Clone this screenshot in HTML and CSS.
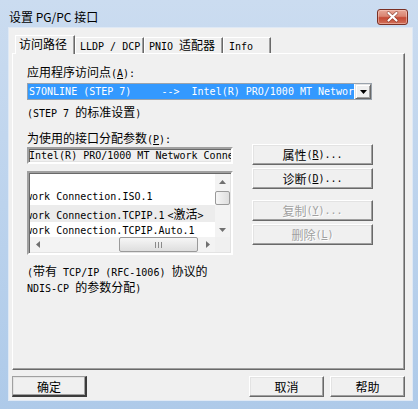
FILE: index.html
```html
<!DOCTYPE html>
<html lang="zh-CN">
<head>
  <meta charset="UTF-8" />
  <title>设置 PG/PC 接口</title>
  <link rel="stylesheet" href="styles.css">
</head>
<body>
  <div class="window">
    <div class="titlebar">
      <div class="title">设置 PG/PC 接口</div>
      <div class="close">
        <svg width="29" height="14" viewBox="0 0 29 14">
          <path d="M10.5 3 L18.5 10.5 M18.5 3 L10.5 10.5" stroke="#6a2218" stroke-width="3.6" stroke-linecap="round" opacity="0.55" />
          <path d="M10.5 3 L18.5 10.5 M18.5 3 L10.5 10.5" stroke="#fff" stroke-width="2.2" stroke-linecap="round" />
        </svg>
      </div>
    </div>

    <div class="client">
      <div class="tabs">
        <div class="tab active">访问路径</div>
        <div class="tab tab-lldp"><span class="m">LLDP / DCP</span></div>
        <div class="tab tab-pnio"><span class="m">PNIO </span>适配器</div>
        <div class="tab tab-info"><span class="m">Info</span></div>
      </div>

      <div class="panel">
        <div class="label">应用程序访问点<span class="m">(<u>A</u>):</span></div>
        <div class="combo">
          <div class="combo-value m">S7ONLINE (STEP 7)     -->  Intel(R) PRO/1000 MT Network Connection.TCPIP.1</div>
          <div class="combo-btn">
            <svg width="7" height="4" viewBox="0 0 7 4"><path d="M0 0 H7 L3.5 4 Z" fill="#000" /></svg>
          </div>
        </div>
        <div class="note"><span class="m">(STEP 7 </span>的标准设置<span class="m">)</span></div>

        <div class="label label-params">为使用的接口分配参数<span class="m">(<u>P</u>):</span></div>
        <div class="params">
          <div class="params-left">
            <div class="textfield m">Intel(R) PRO/1000 MT Network Connection.TCPIP.1</div>
            <div class="listbox">
              <div class="list-items m">
                <div class="list-row first"></div>
                <div class="list-row"><span class="cut">Network Connection.ISO.1</span></div>
                <div class="list-row selected"><span class="cut">Network Connection.TCPIP.1</span><span class="tag">&lt;<span class="zh">激活</span>&gt;</span></div>
                <div class="list-row"><span class="cut">Network Connection.TCPIP.Auto.1</span></div>
              </div>
              <div class="vsb">
                <div class="sb-btn">
                  <svg width="7" height="4" viewBox="0 0 7 4"><path d="M0 4 H7 L3.5 0 Z" fill="#707070" /></svg>
                </div>
                <div class="vsb-track"><div class="vsb-thumb"></div></div>
                <div class="sb-btn">
                  <svg width="7" height="4" viewBox="0 0 7 4"><path d="M0 0 H7 L3.5 4 Z" fill="#707070" /></svg>
                </div>
              </div>
              <div class="hsb">
                <div class="sb-btn">
                  <svg width="4" height="7" viewBox="0 0 4 7"><path d="M4 0 V7 L0 3.5 Z" fill="#707070" /></svg>
                </div>
                <div class="hsb-track"><div class="hsb-thumb"><span></span><span></span><span></span></div></div>
                <div class="sb-btn">
                  <svg width="4" height="7" viewBox="0 0 4 7"><path d="M0 0 V7 L4 3.5 Z" fill="#707070" /></svg>
                </div>
              </div>
              <div class="sb-corner"></div>
            </div>
          </div>

          <div class="params-right">
            <div class="btn side-btn">属性<span class="m">(<u>R</u>)...</span></div>
            <div class="btn side-btn">诊断<span class="m">(<u>D</u>)...</span></div>
            <div class="btn side-btn disabled gap">复制<span class="m">(<u>Y</u>)...</span></div>
            <div class="btn side-btn disabled">删除<span class="m">(<u>L</u>)</span></div>
          </div>
        </div>

        <div class="notes">
          <div><span class="m">(</span>带有<span class="m"> TCP/IP (RFC-1006) </span>协议的</div>
          <div><span class="m">NDIS-CP </span>的参数分配<span class="m">)</span></div>
        </div>
      </div>

      <div class="actions">
        <div class="btn action default">确定</div>
        <div class="btn action">取消</div>
        <div class="btn action">帮助</div>
      </div>
    </div>
  </div>
</body>
</html>
```

FILE: styles.css
```css
:root {
  --face: #f0f0f0;
  --shadow: #a0a0a0;
  --dark: #696969;
  --light: #e3e3e3;
  --frame-top: #cbdcf0;
  --frame-bottom: #aecae9;
}

* {
  box-sizing: border-box;
}

body {
  margin: 0;
  background: var(--frame-bottom);
  font-family: "Noto Sans CJK SC", sans-serif;
  font-size: 12px;
  color: #000;
}

.m {
  font-family: "DejaVu Sans Mono", "Noto Sans CJK SC", monospace;
  font-size: 10px;
}

.zh {
  font-family: "Noto Sans CJK SC", sans-serif;
  font-size: 12px;
}

u {
  text-decoration-thickness: 1px;
  text-underline-offset: 1px;
}

.window {
  width: 418px;
  height: 409px;
  background: linear-gradient(var(--frame-top), #bcd3ed 50%, var(--frame-bottom));
  overflow: hidden;
}

.titlebar {
  height: 28px;
  display: flex;
  padding: 0 10px 0 9px;
}

.title {
  margin-top: 9px;
  height: 16px;
  line-height: 16px;
}

.close {
  margin-left: auto;
  margin-top: 9px;
  width: 31px;
  height: 16px;
  border: 1px solid #7a3024;
  border-radius: 3px;
  background: linear-gradient(#e7a797, #d98471 45%, #c54a35 55%, #d0705a);
  display: flex;
  align-items: center;
  justify-content: center;
  box-shadow: inset 0 0 0 1px rgba(255, 220, 210, 0.45);
}

.client {
  height: 372px;
  margin: 0 6px 0 9px;
  background: var(--face);
  padding: 7px 0 0 3px;
  box-shadow: 0 0 0 1px #dfe9f5;
}

/* tabs */
.tabs {
  display: flex;
  align-items: flex-end;
  height: 18px;
  padding-left: 3px;
  position: relative;
  z-index: 1;
}

.tab {
  height: 16px;
  line-height: 13px;
  padding-left: 4px;
  border: 1px solid;
  border-bottom: 0;
  border-color: #fff var(--dark) transparent #fff;
  box-shadow: inset -1px 0 0 var(--shadow);
  background: var(--face);
  white-space: nowrap;
}

.tab.active {
  width: 60px;
  height: 19px;
  line-height: 16px;
  padding-left: 3px;
  margin-bottom: -1px;
}

.tab-lldp { width: 69px; }
.tab-pnio { width: 79px; }
.tab-info { width: 48px; padding-left: 5px; }

.panel {
  width: 393px;
  height: 317px;
  border: 1px solid;
  border-color: #fff var(--dark) var(--dark) #fff;
  box-shadow: inset -1px -1px 0 var(--shadow);
  padding: 11px 0 0 14px;
}

.label {
  line-height: 14px;
  height: 14px;
  white-space: nowrap;
}

.combo {
  margin-top: 4px;
  width: 345px;
  height: 17px;
  border: 1px solid #9aa3ad;
  background: #fff;
  display: flex;
}

.combo-value {
  width: 326px;
  height: 15px;
  line-height: 15px;
  background: #3399ff;
  color: #fff;
  white-space: pre;
  overflow: hidden;
  padding-left: 1px;
}

.combo-btn {
  width: 16px;
  height: 15px;
  margin-left: 1px;
  background: var(--face);
  border: 1px solid;
  border-color: var(--light) var(--dark) var(--dark) var(--light);
  box-shadow: inset 1px 1px 0 #fff, inset -1px -1px 0 var(--shadow);
  display: flex;
  align-items: center;
  justify-content: center;
}

.note {
  margin-top: 5px;
  line-height: 14px;
}

.label-params {
  margin-top: 10px;
}

.params {
  display: flex;
  margin-top: -1px;
}

.params-left {
  width: 206px;
}

.textfield {
  margin-top: 3px;
  height: 17px;
  line-height: 13px;
  border: 2px solid;
  border-color: var(--shadow) #fff #fff var(--shadow);
  box-shadow: inset 1px 1px 0 var(--dark), inset -1px -1px 0 var(--light);
  background: var(--face);
  white-space: nowrap;
  overflow: hidden;
}

.listbox {
  margin-top: 7px;
  height: 84px;
  border: 2px solid;
  border-color: var(--shadow) #fff #fff var(--shadow);
  box-shadow: inset 1px 1px 0 var(--dark), inset -1px -1px 0 var(--light);
  background: #fff;
  display: grid;
  grid-template-columns: 1fr 15px;
  grid-template-rows: 1fr 15px;
  padding: 1px;
}

.list-items {
  overflow: hidden;
}

.list-row {
  height: 17px;
  line-height: 17px;
  white-space: nowrap;
}

.list-row.first {
  height: 14px;
}

.list-row.selected {
  background: #ececec;
}

.cut {
  margin-left: -22px;
  display: inline-block;
}

.tag {
  margin-left: 3px;
}

.vsb,
.hsb {
  background: #f3f3f3;
  display: flex;
}

.vsb {
  flex-direction: column;
}

.sb-btn {
  flex: 0 0 15px;
  display: flex;
  align-items: center;
  justify-content: center;
}

.vsb-track {
  flex: 1;
  padding-top: 2px;
}

.vsb-thumb {
  width: 15px;
  height: 14px;
  border: 1px solid #9a9a9a;
  border-radius: 2px;
  background: linear-gradient(to right, #f6f6f6, #dedede);
}

.hsb-track {
  flex: 1;
  padding-left: 74px;
}

.hsb-thumb {
  width: 79px;
  height: 15px;
  border: 1px solid #9a9a9a;
  border-radius: 2px;
  background: linear-gradient(#f6f6f6, #dedede);
  display: flex;
  align-items: center;
  justify-content: center;
  gap: 2px;
}

.hsb-thumb span {
  width: 1px;
  height: 6px;
  background: #8a8a8a;
}

.sb-corner {
  background: var(--face);
}

.params-right {
  margin-left: 19px;
  width: 121px;
}

.btn {
  height: 21px;
  background: var(--face);
  border: 1px solid;
  border-color: #fff var(--dark) var(--dark) #fff;
  box-shadow: inset -1px -1px 0 var(--shadow), inset 1px 1px 0 var(--light);
  display: flex;
  align-items: center;
  justify-content: center;
  white-space: nowrap;
}

.side-btn + .side-btn {
  margin-top: 3px;
}

.side-btn.gap {
  margin-top: 11px;
}

.btn.disabled {
  color: var(--shadow);
  text-shadow: 1px 1px 0 #fff;
}

.notes {
  margin-top: 9px;
  line-height: 14px;
}

.actions {
  display: flex;
  width: 393px;
  margin-top: 6px;
}

.action {
  width: 75px;
}

.action.default {
  margin-right: auto;
  border-width: 1px 2px 2px 1px;
  border-color: var(--shadow) #3c3c3c #3c3c3c var(--shadow);
}

.action + .action {
  margin-left: 6px;
}
```
